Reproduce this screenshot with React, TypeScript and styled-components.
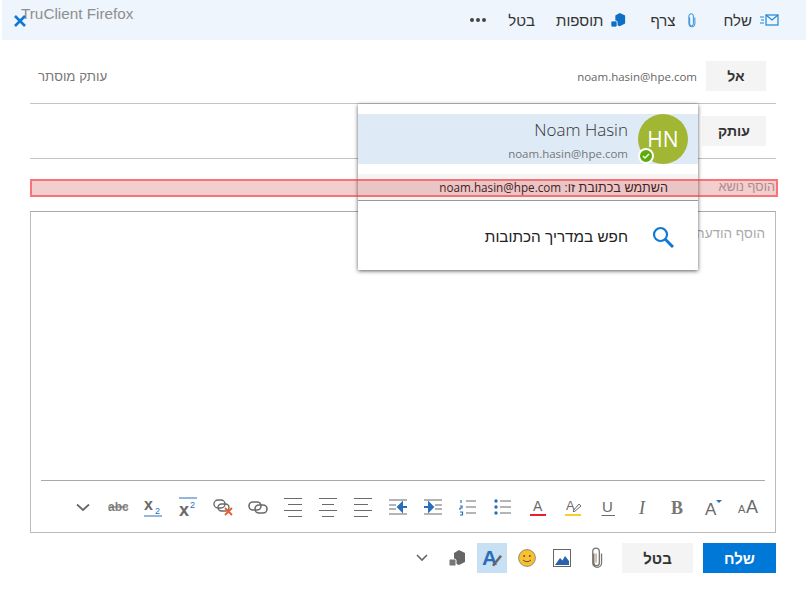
import React from 'react';
import styled, { createGlobalStyle } from 'styled-components';

const GlobalStyle = createGlobalStyle`
  html, body {
    margin: 0;
    padding: 0;
    background: #fff;
    overflow: hidden;
  }
`;

const FONT = `"Open Sans", "Noto Sans", "Liberation Sans", "DejaVu Sans", sans-serif`;
const HEBREW = `"Liberation Sans", "DejaVu Sans", sans-serif`;

const Page = styled.div`
  position: relative;
  width: 806px;
  height: 599px;
  font-family: ${FONT};
  color: #333;
`;

const CommandBar = styled.div`
  position: relative;
  display: flex;
  align-items: center;
  width: 804px;
  height: 40px;
  padding-right: 27px;
  box-sizing: border-box;
  background: #eef5fc;
`;

const CommandItem = styled.div<{ $gap?: number; $after?: number }>`
  display: flex;
  align-items: center;
  gap: ${(p) => p.$gap ?? 7}px;
  margin-left: ${(p) => p.$after ?? 22}px;
  font-family: ${HEBREW};
  font-size: 15px;
  color: #333;
`;

const Watermark = styled.div`
  position: absolute;
  top: 5px;
  left: 19px;
  font-family: "Liberation Sans", Arial, sans-serif;
  font-size: 15.3px;
  color: #8f8f8f;
  direction: ltr;
`;

const CloseMark = styled.svg`
  position: absolute;
  top: 15px;
  left: 12px;
`;

const Form = styled.div`
  padding: 0 30px;
`;

const RecipientRow = styled.div<{ $first?: boolean }>`
  display: flex;
  align-items: center;
  gap: 9px;
  padding: ${(p) => (p.$first ? '21px' : '12px')} 10px 12px 8px;
  border-bottom: 1px solid #c4c4c4;
`;

const FieldButton = styled.div<{ $wide?: boolean }>`
  display: flex;
  align-items: center;
  justify-content: center;
  width: ${(p) => (p.$wide ? '64px' : '60px')};
  height: 30px;
  background: #f4f4f4;
  font-family: ${HEBREW};
  font-size: 14px;
  font-weight: 700;
  color: #333;
`;

const Address = styled.div`
  font-size: 11.5px;
  color: #666;
`;

const BccLink = styled.div`
  margin-right: auto;
  font-family: ${HEBREW};
  font-size: 13.3px;
  color: #777;
`;

const SubjectRow = styled.div`
  position: relative;
  height: 18px;
  margin-top: 20px;
  padding-right: 1px;
  font-family: ${HEBREW};
  font-size: 12.7px;
  line-height: 17px;
  color: #aaa;
`;

const Highlight = styled.div`
  position: absolute;
  z-index: 3;
  top: 0;
  right: -2px;
  bottom: 0;
  left: 0;
  box-sizing: border-box;
  border: 2px solid rgba(255, 40, 50, 0.55);
  background: rgba(200, 30, 30, 0.22);
`;

const Editor = styled.div`
  display: flex;
  flex-direction: column;
  height: 322px;
  margin-top: 14px;
  box-sizing: border-box;
  border: 1px solid #bbb;
  border-top-color: #aaa;
`;

const EditorBody = styled.div`
  flex: 1;
  padding: 14px 10px 0 0;
  font-family: ${HEBREW};
  font-size: 13.5px;
  color: #aaa;
`;

const FormatBar = styled.div`
  display: flex;
  align-items: center;
  height: 51px;
  margin: 0 10px;
  border-top: 1px solid #aaa;
`;

const FormatSlot = styled.div`
  display: flex;
  align-items: center;
  justify-content: center;
  flex: none;
  width: 35px;
  height: 30px;
`;

const Footer = styled.div`
  display: flex;
  align-items: center;
  margin-top: 10px;
`;

const FooterButton = styled.div<{ $primary?: boolean }>`
  display: flex;
  align-items: center;
  justify-content: center;
  width: ${(p) => (p.$primary ? '73px' : '71px')};
  height: 30px;
  margin-left: 10px;
  background: ${(p) => (p.$primary ? '#0078d7' : '#f4f4f4')};
  color: ${(p) => (p.$primary ? '#fff' : '#333')};
  font-family: ${HEBREW};
  font-size: 15px;
  font-weight: 700;
`;

const FooterIcon = styled.div<{ $active?: boolean }>`
  display: flex;
  align-items: center;
  justify-content: center;
  width: 30px;
  height: 30px;
  margin-left: 5px;
  background: ${(p) => (p.$active ? '#c7e0f4' : 'transparent')};
`;

const Popup = styled.div`
  position: absolute;
  z-index: 2;
  top: 104px;
  left: 358px;
  width: 340px;
  height: 166px;
  padding-top: 10px;
  box-sizing: border-box;
  background: #fff;
  box-shadow: 0 1px 4px rgba(0, 0, 0, 0.65);
`;

const PersonaRow = styled.div`
  display: flex;
  gap: 10px;
  height: 50px;
  padding-right: 10px;
  background: #deeaf6;
`;

const Avatar = styled.div`
  position: relative;
  display: flex;
  align-items: center;
  justify-content: center;
  width: 50px;
  height: 50px;
  border-radius: 50%;
  background: #a1b633;
  color: #fff;
  font-size: 21px;
  direction: ltr;
`;

const Presence = styled.div`
  position: absolute;
  bottom: 0;
  left: 0;
  display: flex;
  align-items: center;
  justify-content: center;
  width: 12px;
  height: 12px;
  border: 2px solid #fff;
  border-radius: 50%;
  background: #5dab0a;
`;

const PersonaText = styled.div`
  display: flex;
  flex-direction: column;
  gap: 5px;
  padding-top: 5px;
`;

const PersonaName = styled.div`
  font-size: 17px;
  font-weight: 300;
  line-height: 22px;
  color: #333;
`;

const PersonaMail = styled.div`
  font-size: 11.5px;
  line-height: 16px;
  color: #777;
`;

const UseAddress = styled.div`
  height: 27px;
  margin-top: 10px;
  padding-right: 30px;
  box-sizing: border-box;
  border-bottom: 1px solid #999;
  background: #f4f4f4;
  font-size: 11.7px;
  line-height: 26px;
  color: #222;
`;

const HebrewLabel = styled.span`
  font-family: ${HEBREW};
  font-size: 12.6px;
`;

const SearchRow = styled.div`
  display: flex;
  align-items: center;
  gap: 24px;
  height: 68px;
  padding: 3px 24px 0 0;
  box-sizing: border-box;
  font-family: ${HEBREW};
  font-size: 15.3px;
  color: #222;
`;

const GRAY = '#6a6a6a';
const BLUE = '#2a6ebb';

const Glyph = ({ children, w = 24, h = 24 }: { children: React.ReactNode; w?: number; h?: number }) => (
  <svg width={w} height={h} viewBox={`0 0 ${w} ${h}`} fill="none" style={{ direction: 'ltr' }}>
    {children}
  </svg>
);

const slab = { fontFamily: '"Liberation Serif", serif', fontWeight: 700, fill: GRAY };
const sans = { fontFamily: '"Liberation Sans", sans-serif', fill: GRAY };

const Lines = ({ rows }: { rows: [number, number][] }) => (
  <>
    {rows.map(([x1, x2], i) => (
      <path key={i} d={`M${x1} ${3.5 + i * 6}H${x2}`} stroke={GRAY} />
    ))}
  </>
);

const formatIcons: React.ReactNode[] = [
  <Glyph key="grow">
    <text x="2" y="18" fontSize="11" {...sans}>A</text>
    <text x="10" y="18" fontSize="18" {...sans}>A</text>
  </Glyph>,
  <Glyph key="shrink">
    <text x="4" y="20" fontSize="17" {...sans}>A</text>
    <path d="M15 5h6l-3 3z" fill={BLUE} />
  </Glyph>,
  <Glyph key="bold">
    <text x="5" y="19" fontSize="18" {...slab} fill="#777">B</text>
  </Glyph>,
  <Glyph key="italic">
    <text x="8" y="19" fontSize="18" {...slab} fontStyle="italic" fontWeight={400}>I</text>
  </Glyph>,
  <Glyph key="underline">
    <text x="6" y="17" fontSize="15" {...sans}>U</text>
    <path d="M5.5 20.5H19" stroke={GRAY} />
  </Glyph>,
  <Glyph key="marker">
    <text x="5" y="15" fontSize="13" {...sans}>A</text>
    <path d="M12 16l6-7 2 2-7 6z" stroke={GRAY} />
    <path d="M4 20h16" stroke="#fccb2e" strokeWidth="2" />
  </Glyph>,
  <Glyph key="color">
    <text x="7" y="16" fontSize="14" {...sans}>A</text>
    <path d="M4 20h16" stroke="#e8202e" strokeWidth="2" />
  </Glyph>,
  <Glyph key="bullets">
    <circle cx="5" cy="6" r="1.7" fill={BLUE} />
    <circle cx="5" cy="12" r="1.7" fill={BLUE} />
    <circle cx="5" cy="18" r="1.7" fill={BLUE} />
    <path d="M9 6h11M9 12h11M9 18h11" stroke={GRAY} />
  </Glyph>,
  <Glyph key="numbers">
    <path d="M5 5v3M4 11h2v2H4v2M4 17h2.5v3H4" stroke={BLUE} strokeWidth="1.2" />
    <path d="M10 6h10M10 12h10M10 18h10" stroke={GRAY} />
  </Glyph>,
  <Glyph key="indent">
    <path d="M3 5h18M3 19h18M14 10h7M14 14h7" stroke="#b4b4b4" strokeWidth="2" />
    <path d="M3 12h8M8 8l4 4-4 4z" stroke={BLUE} strokeWidth="2" fill={BLUE} />
  </Glyph>,
  <Glyph key="outdent">
    <path d="M3 5h18M3 19h18M3 10h7M3 14h7" stroke="#b4b4b4" strokeWidth="2" />
    <path d="M21 12h-8M16 8l-4 4 4 4z" stroke={BLUE} strokeWidth="2" fill={BLUE} />
  </Glyph>,
  <Glyph key="left"><Lines rows={[[3, 21], [3, 17], [3, 21], [3, 17]]} /></Glyph>,
  <Glyph key="center"><Lines rows={[[3, 21], [6, 18], [3, 21], [6, 18]]} /></Glyph>,
  <Glyph key="right"><Lines rows={[[3, 21], [7, 21], [3, 21], [7, 21]]} /></Glyph>,
  <Glyph key="link">
    <rect x="3" y="7" width="12" height="8" rx="4" stroke={GRAY} strokeWidth="1.6" />
    <rect x="9" y="10" width="12" height="8" rx="4" stroke={GRAY} strokeWidth="1.6" />
  </Glyph>,
  <Glyph key="unlink">
    <rect x="3" y="5" width="11" height="8" rx="4" stroke={GRAY} strokeWidth="1.4" />
    <rect x="7" y="9" width="11" height="7" rx="3.5" stroke={GRAY} strokeWidth="1.4" />
    <path d="M14 13l7 7M21 13l-7 7" stroke="#ec5a2e" strokeWidth="1.8" />
  </Glyph>,
  <Glyph key="sup">
    <path d="M3 3h18" stroke={BLUE} />
    <text x="3" y="21" fontSize="18" {...sans} fontWeight={700}>x</text>
    <text x="14" y="13" fontSize="9" {...sans} fill={BLUE}>2</text>
  </Glyph>,
  <Glyph key="sub">
    <text x="3" y="15" fontSize="16" {...sans} fontWeight={700}>x</text>
    <text x="14" y="19" fontSize="9" {...sans} fill={BLUE}>2</text>
    <path d="M3 21h18" stroke={BLUE} />
  </Glyph>,
  <Glyph key="strike">
    <text x="2" y="16" fontSize="12" {...sans} fontWeight={700} fill="#808080">abc</text>
    <path d="M2 12h20" stroke={GRAY} />
  </Glyph>,
  <Glyph key="more">
    <path d="M6 9.5l6 5.5 6-5.5" stroke="#666" strokeWidth="1.7" />
  </Glyph>,
];

const PaperClip = ({ color, edge, size }: { color: string; edge?: string; size: number }) => (
  <svg width={size * 0.6} height={size} viewBox="0 0 12 20" fill="none">
    <path
      d="M3.5 6v8.5a2.5 2.5 0 0 0 5 0V4a3 3 0 0 0-6 0v10.5a4 4 0 0 0 8 0V6"
      stroke={color}
      strokeWidth="1.2"
    />
    {edge && <path d="M5.5 6v8" stroke={edge} />}
  </svg>
);

const Cube = ({ color, accent, size }: { color: string; accent: string; size: number }) => (
  <svg width={size} height={size} viewBox="0 0 18 18">
    <path d="M11 1l6 3v9l-6 3-5-2V4z" fill={color} />
    <rect x="1" y="10" width="7" height="7" rx="1.5" fill={accent} stroke="#fff" />
  </svg>
);

export default function App() {
  return (
    <Page dir="rtl">
      <GlobalStyle />
      <CommandBar>
        <CommandItem $after={28}>
          <svg width="20" height="14" viewBox="0 0 20 14" fill="none">
            <rect x="7" y="2" width="12" height="10" stroke="#1f86d8" strokeWidth="1.2" />
            <path d="M7 2l6 5 6-5M1 4h4M2 7h3M1 10h4" stroke="#1f86d8" strokeWidth="1.2" />
          </svg>
          שלח
        </CommandItem>
        <CommandItem $gap={11} $after={24}>
          <PaperClip color="#1f86d8" size={15} />
          צרף
        </CommandItem>
        <CommandItem $after={21}>
          <Cube color="#0f6fc6" accent="#0f6fc6" size={16} />
          תוספות
        </CommandItem>
        <CommandItem>בטל</CommandItem>
        <CommandItem $after={0}>
          <svg width="16" height="4" viewBox="0 0 16 4">
            <circle cx="2" cy="2" r="2" fill="#444" />
            <circle cx="8" cy="2" r="2" fill="#444" />
            <circle cx="14" cy="2" r="2" fill="#444" />
          </svg>
        </CommandItem>
        <Watermark>TruClient Firefox</Watermark>
        <CloseMark width="12" height="12" viewBox="0 0 12 12">
          <path d="M1 1l10 10M11 1L1 11" stroke="#0f78d4" strokeWidth="2.6" />
        </CloseMark>
      </CommandBar>

      <Form>
        <RecipientRow $first>
          <FieldButton>אל</FieldButton>
          <Address>noam.hasin@hpe.com</Address>
          <BccLink>עותק מוסתר</BccLink>
        </RecipientRow>
        <RecipientRow>
          <FieldButton $wide>עותק</FieldButton>
        </RecipientRow>
        <SubjectRow>
          הוסף נושא
          <Highlight />
        </SubjectRow>
        <Editor>
          <EditorBody>הוסף הודעה</EditorBody>
          <FormatBar>
            {formatIcons.map((icon, i) => (
              <FormatSlot key={i}>{icon}</FormatSlot>
            ))}
          </FormatBar>
        </Editor>
        <Footer>
          <FooterButton $primary>שלח</FooterButton>
          <FooterButton>בטל</FooterButton>
          <FooterIcon>
            <PaperClip color="#777" edge="#c98a4a" size={22} />
          </FooterIcon>
          <FooterIcon>
            <svg width="18" height="18" viewBox="0 0 18 18" fill="none">
              <rect x="0.5" y="0.5" width="17" height="17" stroke="#666" />
              <path d="M2 16l5-7 2.5 2.5L12 7l4 5v4z" fill="#2a62ae" />
            </svg>
          </FooterIcon>
          <FooterIcon>
            <svg width="18" height="18" viewBox="0 0 18 18" fill="none">
              <circle cx="9" cy="9" r="8.4" fill="#fac12f" stroke="#777" strokeWidth="0.8" />
              <circle cx="6.2" cy="7" r="1" fill="#555" />
              <circle cx="11.8" cy="7" r="1" fill="#555" />
              <path d="M5 11q4 3.5 8 0" stroke="#555" />
            </svg>
          </FooterIcon>
          <FooterIcon $active>
            <svg width="24" height="24" viewBox="0 0 24 24" style={{ direction: 'ltr' }}>
              <text x="2" y="19" fontSize="21" fontWeight={700} fontFamily='"Liberation Sans", sans-serif' fill="#2a6ebb">
                A
              </text>
              <path d="M12 19l8-10 2 1.5-8 10z" fill="#666" />
            </svg>
          </FooterIcon>
          <FooterIcon>
            <Cube color="#666" accent="#777" size={18} />
          </FooterIcon>
          <FooterIcon>
            <svg width="14" height="10" viewBox="0 0 14 10" fill="none">
              <path d="M2 2l5 5 5-5" stroke="#666" strokeWidth="1.6" />
            </svg>
          </FooterIcon>
        </Footer>
      </Form>

      <Popup>
        <PersonaRow>
          <Avatar>
            HN
            <Presence>
              <svg width="8" height="8" viewBox="0 0 8 8" fill="none">
                <path d="M1 4l2 2 4-4" stroke="#fff" strokeWidth="1.4" />
              </svg>
            </Presence>
          </Avatar>
          <PersonaText>
            <PersonaName>Noam Hasin</PersonaName>
            <PersonaMail>noam.hasin@hpe.com</PersonaMail>
          </PersonaText>
        </PersonaRow>
        <UseAddress>
          <HebrewLabel>השתמש בכתובת זו:</HebrewLabel> noam.hasin@hpe.com
        </UseAddress>
        <SearchRow>
          <svg width="22" height="22" viewBox="0 0 22 22" fill="none">
            <circle cx="8.5" cy="8.5" r="6.5" stroke="#0f78d4" strokeWidth="2.2" />
            <path d="M13 13l8 8" stroke="#0f78d4" strokeWidth="3" />
          </svg>
          חפש במדריך הכתובות
        </SearchRow>
      </Popup>
    </Page>
  );
}
